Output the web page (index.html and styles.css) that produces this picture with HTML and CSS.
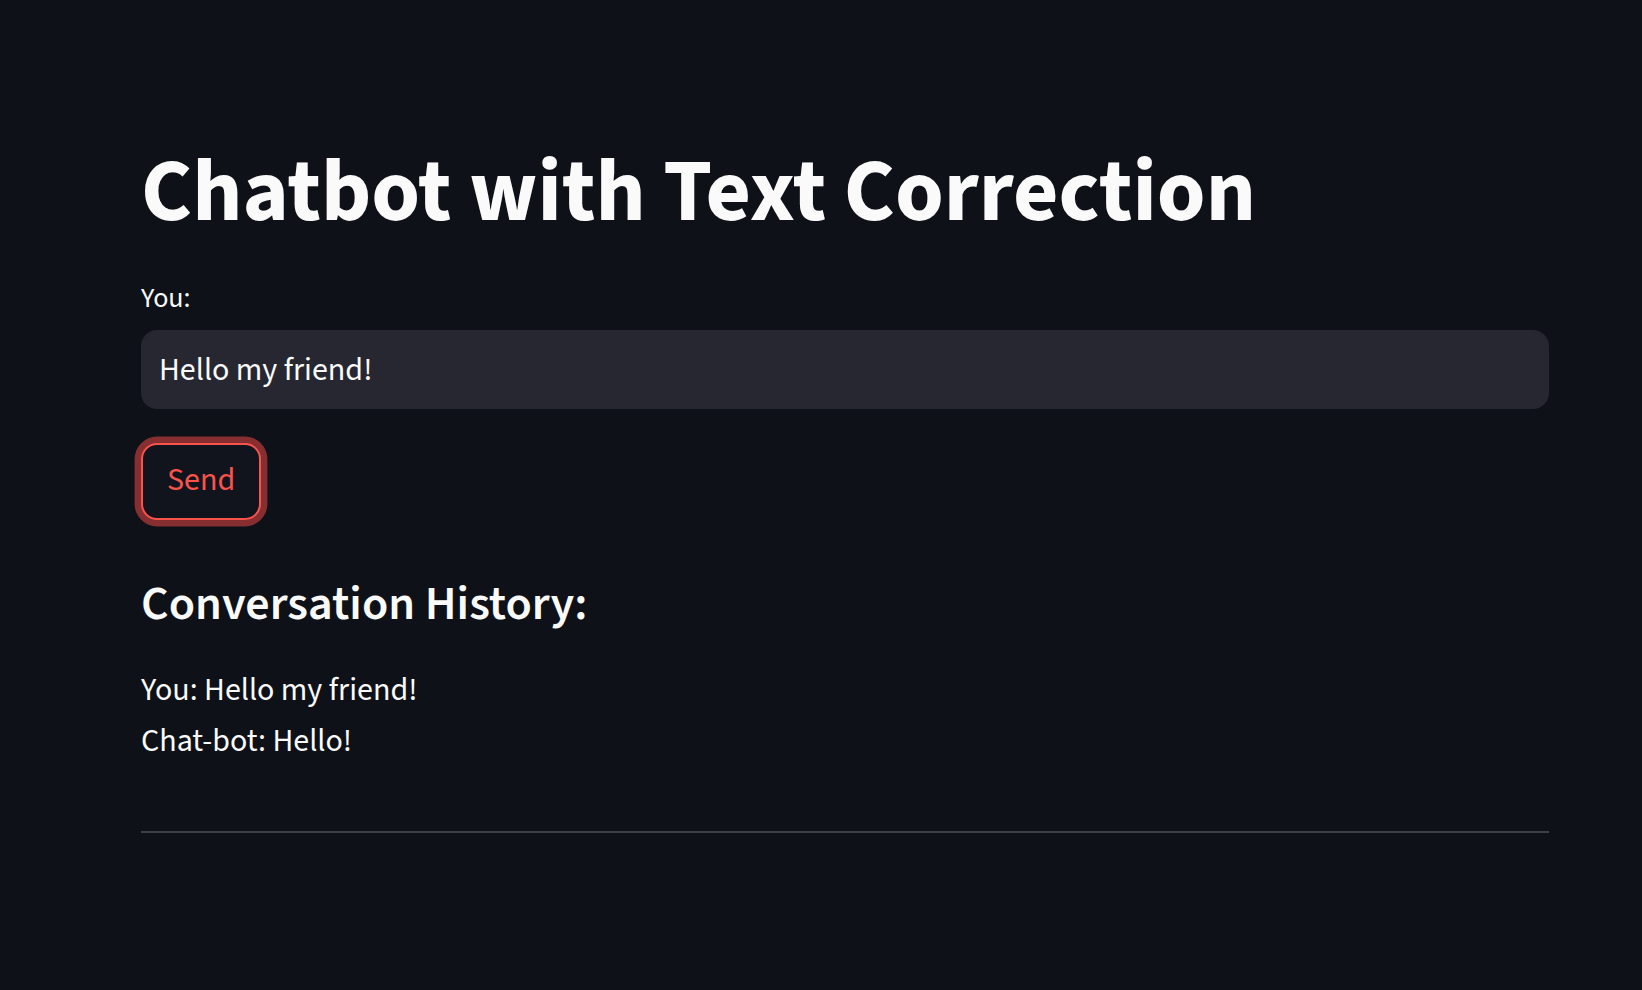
FILE: index.html
```html
<!DOCTYPE html>
<html lang="en">
<head>
<meta charset="utf-8">
<title>Chatbot with Text Correction</title>
<link rel="stylesheet" href="styles.css">
</head>
<body>
<main class="main">
  <h1 class="title">Chatbot with Text Correction</h1>
  <div class="field">
    <label class="field-label" for="msg">You:</label>
    <input class="field-input" id="msg" type="text" value="Hello my friend!">
  </div>
  <div class="actions">
    <button class="btn btn-focus" type="button">Send</button>
  </div>
  <h3 class="subheader">Conversation History:</h3>
  <div class="history">
    <p class="history-line">You: Hello my friend!</p>
    <p class="history-line">Chat-bot: Hello!</p>
  </div>
  <hr class="divider">
</main>
</body>
</html>
```
FILE: styles.css
```css
html, body {
  margin: 0;
  padding: 0;
  background: #0e1117;
  color: #fafafa;
  font-family: "Source Sans 3", "Lato", "Liberation Sans", sans-serif;
}

.main {
  width: 1408px;
  margin-left: 141px;
  padding-top: 140px;
  display: flex;
  flex-direction: column;
}

.title {
  margin: 0;
  font-size: 88px;
  line-height: 1.2;
  font-weight: 700;
  color: #fafafa;
}

.field {
  margin-top: 30px;
  display: flex;
  flex-direction: column;
}

.field-label {
  font-size: 28px;
  line-height: 44.8px;
  color: #fafafa;
  margin-bottom: 9.6px;
}

.field-input {
  box-sizing: border-box;
  width: 100%;
  height: 79.5px;
  margin: 0;
  padding: 0 16px;
  border: 2px solid #262730;
  border-radius: 16px;
  background: #262730;
  color: #fafafa;
  font-family: inherit;
  font-size: 32px;
  line-height: 51.2px;
  outline: none;
}

.actions {
  margin-top: 33.5px;
  display: flex;
}

.btn {
  box-sizing: border-box;
  height: 76.8px;
  padding: 0 24px 2px;
  border-radius: 16px;
  border: 2px solid rgba(250, 250, 250, 0.2);
  background: #0e1117;
  color: #fafafa;
  font-family: inherit;
  font-size: 32px;
  line-height: 51.2px;
  display: inline-flex;
  align-items: center;
  justify-content: center;
}

.btn-focus {
  border: 2.5px solid #f9534c;
  color: #f9534c;
  box-shadow: 0 0 0 6.4px rgba(255, 75, 75, 0.5);
  background: #11141c;
}

.subheader {
  margin: 56px 0 0 0;
  font-size: 48px;
  line-height: 1.2;
  font-weight: 600;
  color: #fafafa;
}

.history {
  margin-top: 31.5px;
}

.history-line {
  margin: 0;
  font-size: 32px;
  line-height: 51.2px;
}

.divider {
  margin: 63.5px 0 0 0;
  border: none;
  height: 2px;
  background: rgba(250, 250, 250, 0.2);
}
```
